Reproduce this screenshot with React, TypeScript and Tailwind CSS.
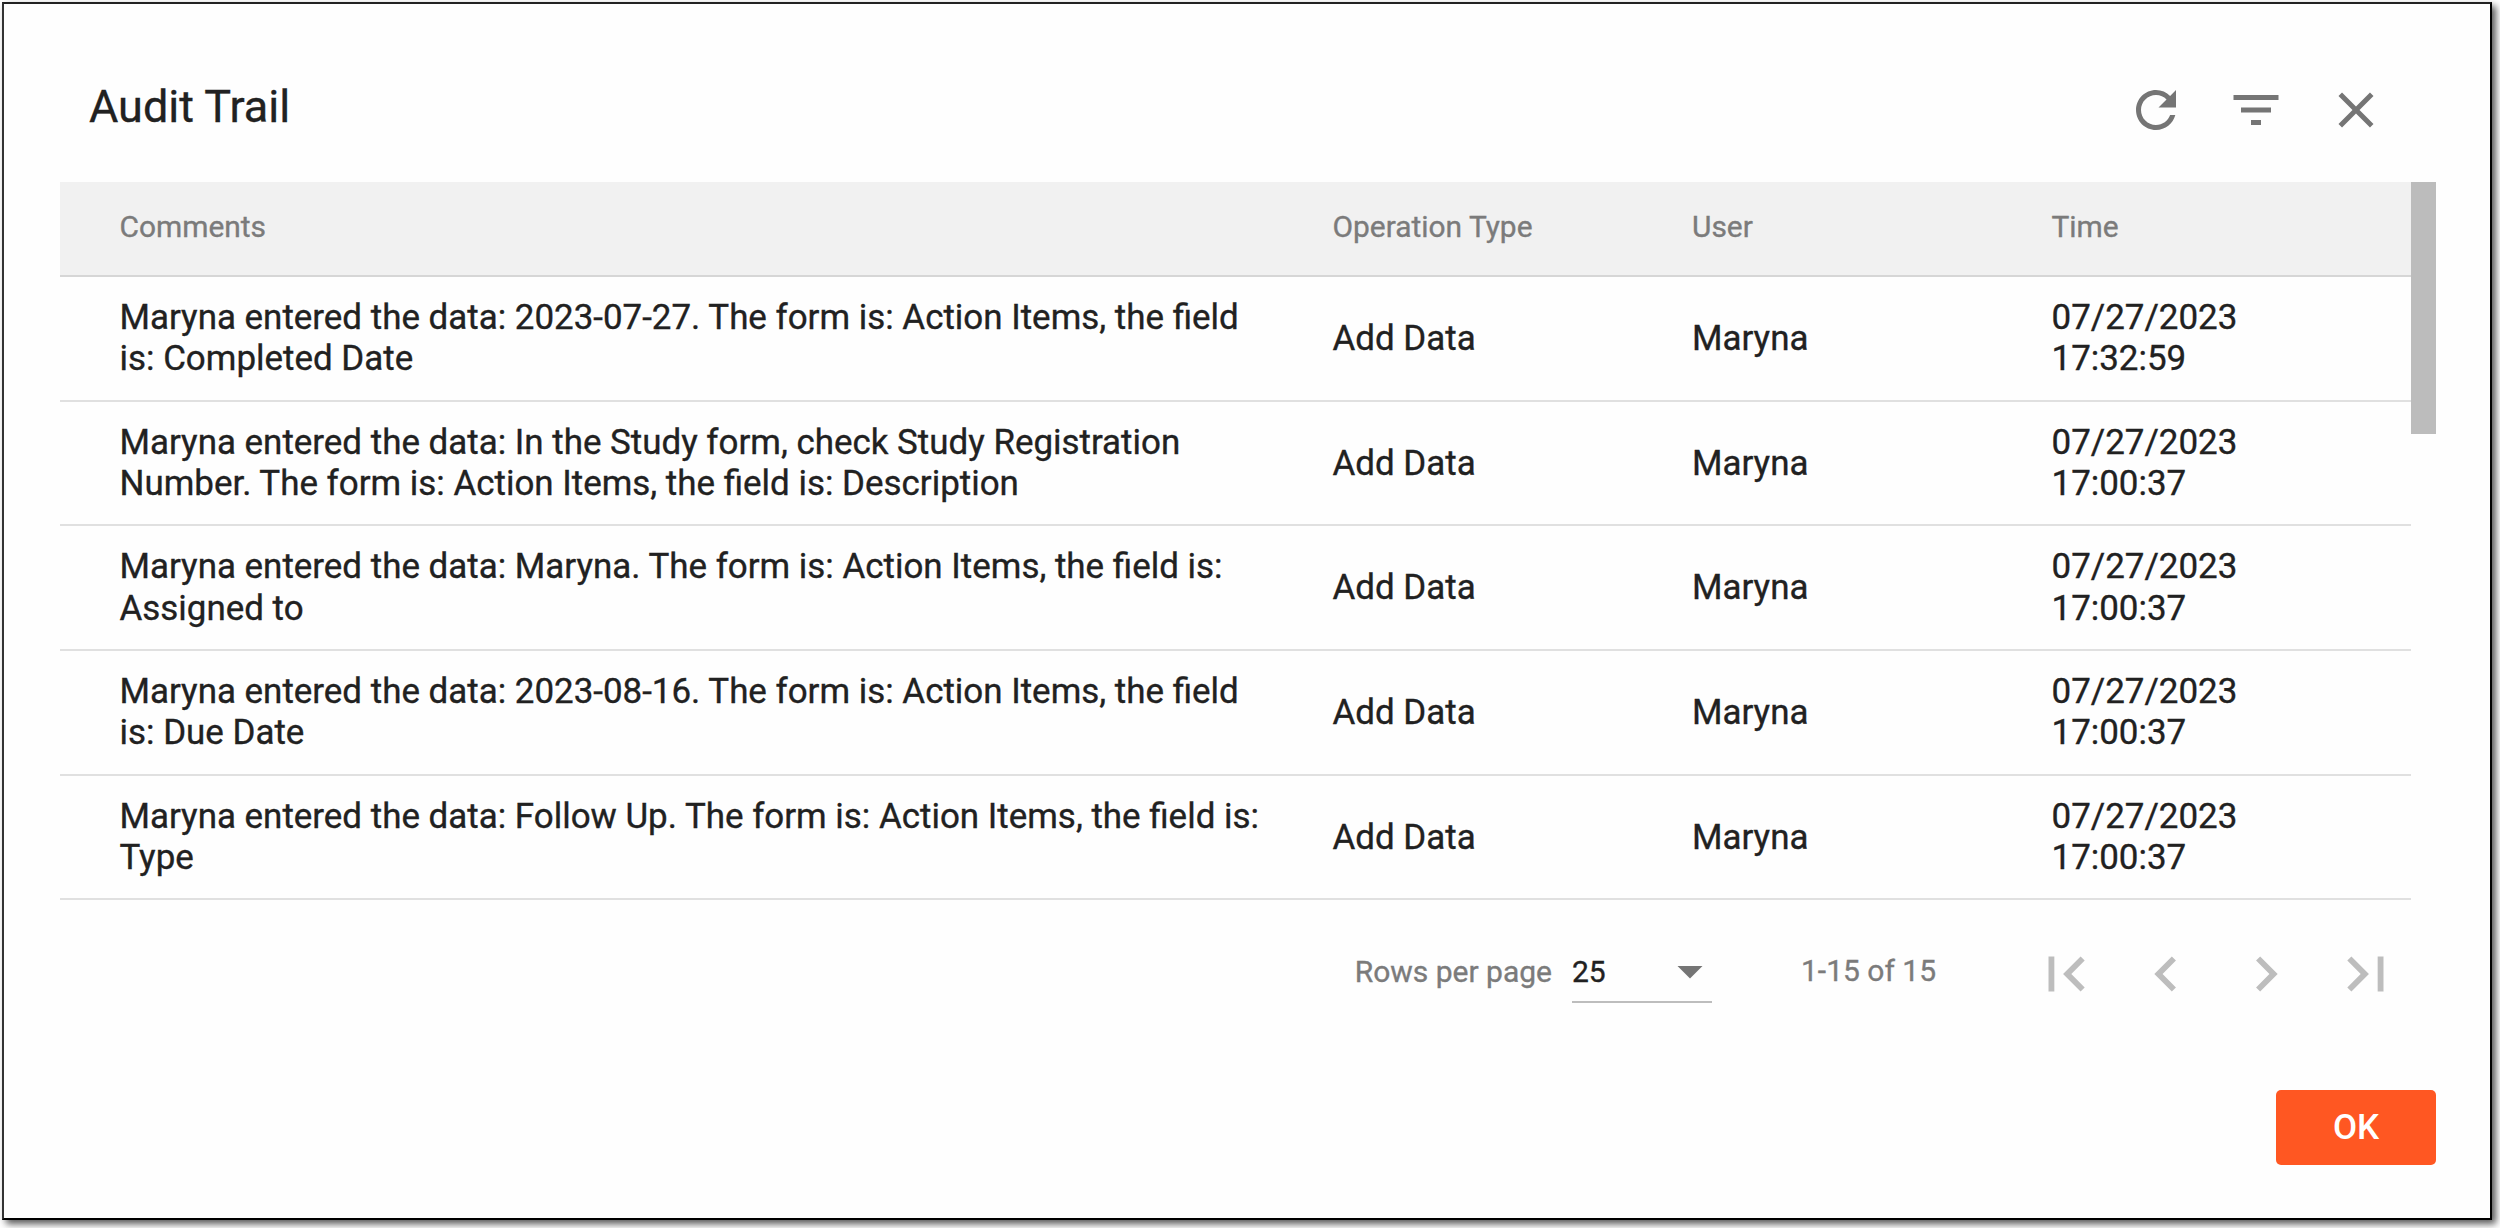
import React from "react";

const ICONS = {
  refresh:
    "M17.65 6.35C16.2 4.9 14.21 4 12 4c-4.42 0-7.99 3.58-7.99 8s3.57 8 7.99 8c3.73 0 6.84-2.55 7.73-6h-2.08c-.82 2.33-3.04 4-5.65 4-3.31 0-6-2.69-6-6s2.69-6 6-6c1.66 0 3.14.69 4.22 1.78L13 11h7V4l-2.35 2.35z",
  filter: "M10 18h4v-2h-4v2zM3 6v2h18V6H3zm3 7h12v-2H6v2z",
  close:
    "M19 6.41L17.59 5 12 10.59 6.41 5 5 6.41 10.59 12 5 17.59 6.41 19 12 13.41 17.59 19 19 17.59 13.41 12z",
  first: "M18.41 16.59L13.82 12l4.59-4.59L17 6l-6 6 6 6zM6 6h2v12H6z",
  prev: "M15.41 7.41L14 6l-6 6 6 6 1.41-1.41L10.83 12z",
  next: "M10 6L8.59 7.41 13.17 12l-4.58 4.59L10 18l6-6z",
  last: "M5.59 7.41L10.18 12l-4.59 4.59L7 18l6-6-6-6zM16 6h2v12h-2z",
  down: "M7 10l5 5 5-5z",
};

function Icon({ name, className }: { name: keyof typeof ICONS; className: string }) {
  return (
    <svg viewBox="0 0 24 24" fill="currentColor" className={className}>
      <path d={ICONS[name]} />
    </svg>
  );
}

const COLS = "grid grid-cols-[1213px_359.5px_359.5px_1fr] items-center pl-[59.5px]";

const ROWS = [
  ["Maryna entered the data: 2023-07-27. The form is: Action Items, the field", "is: Completed Date", "17:32:59"],
  ["Maryna entered the data: In the Study form, check Study Registration", "Number. The form is: Action Items, the field is: Description", "17:00:37"],
  ["Maryna entered the data: Maryna. The form is: Action Items, the field is:", "Assigned to", "17:00:37"],
  ["Maryna entered the data: 2023-08-16. The form is: Action Items, the field", "is: Due Date", "17:00:37"],
  ["Maryna entered the data: Follow Up. The form is: Action Items, the field is:", "Type", "17:00:37"],
];

export default function App() {
  return (
    <div className="h-[1228px] w-[2500px] overflow-hidden bg-white pl-[2px] pt-[2px] font-['Roboto',sans-serif] text-[#212121] [-webkit-text-stroke:0.35px_currentColor]">
      <div className="flex h-[1218px] w-[2490px] flex-col border-2 border-black border-l-[#333] border-t-[#222] bg-[#fefefe] pl-[56px] pr-[54px] shadow-[4px_4px_7px_rgba(0,0,0,0.65)]">
        <header className="flex h-[178px] shrink-0 items-start justify-between pl-[29px] pr-[50.5px]">
          <h1 className="mt-[75px] text-[45px] leading-[56px]">Audit Trail</h1>
          <div className="mt-[75.5px] flex gap-[40px] text-[#757575]">
            <Icon name="refresh" className="size-[60px]" />
            <Icon name="filter" className="size-[60px]" />
            <Icon name="close" className="size-[60px]" />
          </div>
        </header>

        <div className="flex shrink-0 items-start">
          <div className="w-[2351px]">
            <div className={`${COLS} h-[95px] border-b-2 border-[#d6d6d6] bg-[#f1f1f1] pb-[3px] text-[29.9px] leading-[36px] text-[#7b7b7b]`}>
              <span>Comments</span>
              <span>Operation Type</span>
              <span>User</span>
              <span>Time</span>
            </div>
            {ROWS.map(([a, b, time], i) => (
              <div key={i} className={`${COLS} h-[124.7px] border-b-2 border-[#e0e0e0] text-[34.93px] leading-[41.5px]`}>
                <div className="whitespace-nowrap">
                  {a}
                  <br />
                  {b}
                </div>
                <span className="pt-[1px]">Add Data</span>
                <span className="pt-[1px]">Maryna</span>
                <div>
                  07/27/2023
                  <br />
                  {time}
                </div>
              </div>
            ))}
          </div>
          <div className="h-[252px] w-[25px] bg-[#bcbcbc]" />
        </div>

        <div className="mt-[39px] flex h-[70px] shrink-0 items-start justify-end pr-[35px] text-[30px] leading-[36px] text-[#7b7b7b]">
          <span className="mt-[15px] whitespace-nowrap">Rows per page</span>
          <div className="ml-[20px] flex h-[64px] w-[140px] items-start justify-between border-b-2 border-[#bdbdbd]">
            <span className="mt-[15px] text-[#212121]">25</span>
            <Icon name="down" className="mr-[-7.5px] mt-[2px] size-[60px] text-[#757575]" />
          </div>
          <span className="ml-[89px] mt-[14px] w-[138px] whitespace-nowrap">1-15 of 15</span>
          <div className="ml-[92px] flex gap-[30px] text-[#bdbdbd]">
            <Icon name="first" className="size-[70px]" />
            <Icon name="prev" className="size-[70px]" />
            <Icon name="next" className="size-[70px]" />
            <Icon name="last" className="size-[70px]" />
          </div>
        </div>

        <div className="mt-[80.5px] flex justify-end">
          <button className="h-[75px] w-[160px] rounded-[5px] bg-[#ff5722] text-[35px] font-medium leading-none text-white [-webkit-text-stroke:0]">OK</button>
        </div>
      </div>
    </div>
  );
}
